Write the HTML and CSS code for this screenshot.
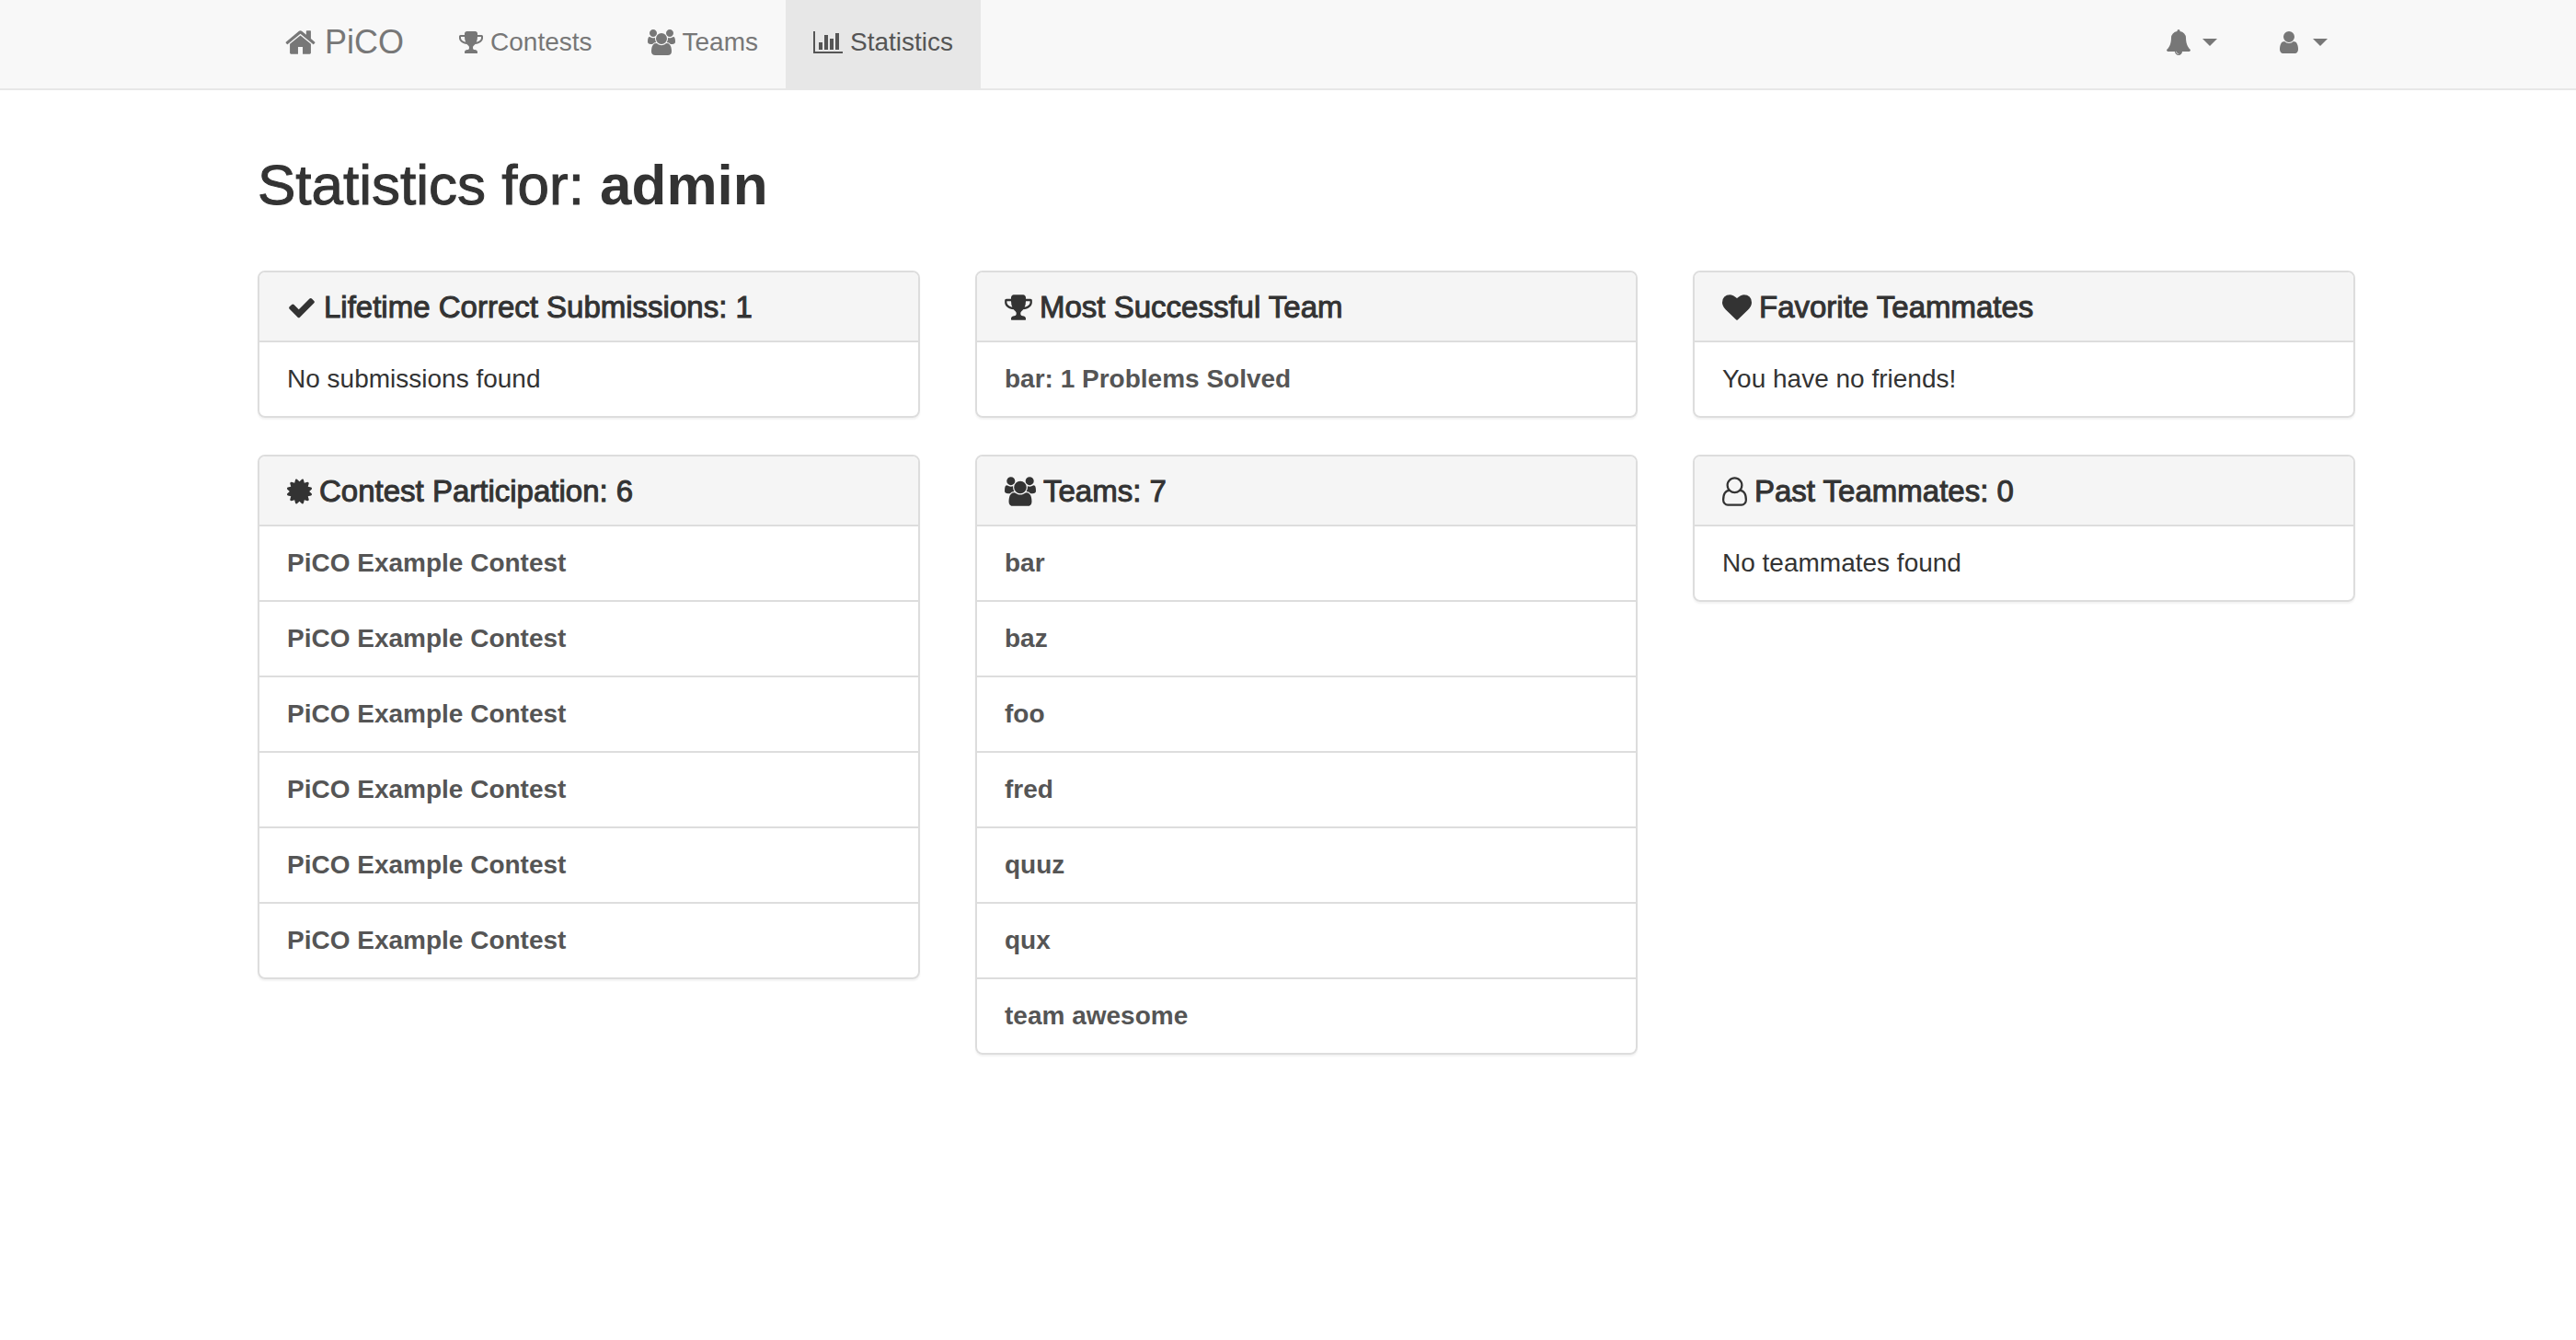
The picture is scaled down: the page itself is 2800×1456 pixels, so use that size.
FILE: index.html
```html
<!DOCTYPE html>
<html lang="en">
<head>
<meta charset="utf-8">
<meta name="viewport" content="width=device-width, initial-scale=1">
<title>PiCO - Statistics</title>
<link rel="stylesheet" href="styles.css">
</head>
<body>
<svg class="sprite" aria-hidden="true">
  <symbol id="home" viewBox="64 0 1664 1792"><path d="M1472 992v480q0 26-19 45t-45 19h-384v-384h-256v384h-384q-26 0-45-19t-19-45v-480q0-1 .5-3t.5-3l575-474 575 474q1 2 1 6zm223-69l-62 74q-8 9-21 11h-3q-13 0-21-7l-692-577-692 577q-12 8-24 7-13-2-21-11l-62-74q-8-10-7-23.5t11-21.5l719-599q32-26 76-26t76 26l244 204v-195q0-14 9-23t23-9h192q14 0 23 9t9 23v408l219 182q10 8 11 21.5t-7 23.5z"/></symbol>
  <symbol id="trophy" viewBox="64 0 1664 1792"><path d="M522 883q-74-162-74-371h-256v96q0 78 94.5 162t235.5 113zm1078-275v-96h-256q0 209-74 371 141-29 235.5-113t94.5-162zm128-128v128q0 71-41.5 143t-112 130-173 97.5-215.5 44.5q-42 54-95 95-38 34-52.5 72.5t-14.5 89.5q0 54 30.5 91t97.5 37q75 0 133.5 45.5t58.5 114.5v64q0 14-9 23t-23 9h-832q-14 0-23-9t-9-23v-64q0-69 58.5-114.5t133.5-45.5q67 0 97.5-37t30.5-91q0-51-14.5-89.5t-52.5-72.5q-53-41-95-95-113-5-215.5-44.5t-173-97.5-112-130-41.5-143v-128q0-40 28-68t68-28h288v-96q0-66 47-113t113-47h576q66 0 113 47t47 113v96h288q40 0 68 28t28 68z"/></symbol>
  <symbol id="users" viewBox="64 0 1920 1792"><path d="M657 896q-162 5-265 128h-134q-82 0-138-40.5t-56-118.5q0-353 124-353 6 0 43.5 21t97.5 42.5 119 21.5q67 0 133-23-5 37-5 66 0 139 81 256zm1071 637q0 120-73 189.5t-194 69.5h-874q-121 0-194-69.5t-73-189.5q0-53 3.5-103.5t14-109 26.5-108.5 43-97.5 62-81 85.5-53.5 111.5-20q10 0 43 21.5t73 48 107 48 135 21.5 135-21.5 107-48 73-48 43-21.5q61 0 111.5 20t85.5 53.5 62 81 43 97.5 26.5 108.5 14 109 3.5 103.5zm-1024-1277q0 106-75 181t-181 75-181-75-75-181 75-181 181-75 181 75 75 181zm704 384q0 159-112.5 271.5t-271.5 112.5-271.5-112.5-112.5-271.5 112.5-271.5 271.5-112.5 271.5 112.5 112.5 271.5zm576 225q0 78-56 118.5t-138 40.5h-134q-103-123-265-128 81-117 81-256 0-29-5-66 66 23 133 23 59 0 119-21.5t97.5-42.5 43.5-21q124 0 124 353zm-128-609q0 106-75 181t-181 75-181-75-75-181 75-181 181-75 181 75 75 181z"/></symbol>
  <symbol id="chart" viewBox="0 0 2048 1792"><path d="M640 896v512h-256v-512zm384-512v1024h-256v-1024zm1024 1152v128h-2048v-1536h128v1408zm-640-896v768h-256v-768zm384-384v1152h-256v-1152z"/></symbol>
  <symbol id="bell" viewBox="0 0 1792 1792"><path d="M912 1696q0-16-16-16-59 0-101.5-42.5t-42.5-101.5q0-16-16-16t-16 16q0 73 51.5 124.5t124.5 51.5q16 0 16-16zm816-288q0 52-38 90t-90 38h-448q0 106-75 181t-181 75-181-75-75-181h-448q-52 0-90-38t-38-90q50-42 91-88t85-119.5 74.5-158.5 50-206 19.5-260q0-152 117-282.5t307-158.5q-8-19-8-39 0-40 28-68t68-28 68 28 28 68q0 20-8 39 190 28 307 158.5t117 282.5q0 139 19.5 260t50 206 74.5 158.5 85 119.5 91 88z"/></symbol>
  <symbol id="user" viewBox="0 0 1792 1792"><path d="M1536 1399q0 109-62.5 187t-150.5 78h-854q-88 0-150.5-78t-62.5-187q0-85 8.5-160.5t31.5-152 58.5-131 94-89 134.5-34.5q131 128 313 128t313-128q76 0 134.5 34.5t94 89 58.5 131 31.5 152 8.5 160.5zm-256-887q0 159-112.5 271.5t-271.5 112.5-271.5-112.5-112.5-271.5 112.5-271.5 271.5-112.5 271.5 112.5 112.5 271.5z"/></symbol>
  <symbol id="check" viewBox="0 0 1792 1792"><path d="M1671 566q0 40-28 68l-724 724-136 136q-28 28-68 28t-68-28l-136-136-362-362q-28-28-28-68t28-68l136-136q28-28 68-28t68 28l294 295 656-657q28-28 68-28t68 28l136 136q28 28 28 68z"/></symbol>
  <symbol id="certificate" viewBox="128 0 1536 1792"><path d="M1504 896l138 135q30 28 20 70-12 41-52 51l-188 48 53 186q12 41-19 70-29 31-70 19l-186-53-48 188q-10 40-51 52-12 2-19 2-31 0-51-22l-135-138-135 138q-28 30-70 20-41-11-51-52l-48-188-186 53q-41 12-70-19-31-29-19-70l53-186-188-48q-40-10-52-51-10-42 20-70l138-135-138-135q-30-28-20-70 12-41 52-51l188-48-53-186q-12-41 19-70 29-31 70-19l186 53 48-188q10-41 51-51 41-12 70 19l135 139 135-139q29-30 70-19 41 10 51 51l48 188 186-53q41-12 70 19 31 29 19 70l-53 186 188 48q40 10 52 51 10 42-20 70z"/></symbol>
  <symbol id="heart" viewBox="0 0 1792 1792"><path d="M896 1664q-26 0-44-18l-624-602q-10-8-27.5-26t-55.5-65.5-68-97.5-53.5-121-23.5-138q0-220 127-344t351-124q62 0 126.5 21.5t120 58 95.5 68.5 76 68q36-36 76-68t95.5-68.5 120-58 126.5-21.5q224 0 351 124t127 344q0 221-229 450l-623 600q-18 18-44 18z"/></symbol>
  <symbol id="user-o" viewBox="0 0 1536 1792"><path d="M1201 784q47 14 89.5 38t89 73 79.5 115.5 55 172 22 236.5q0 154-100 263.5t-241 109.5h-854q-141 0-241-109.5t-100-263.5q0-131 22-236.5t55-172 79.5-115.5 89-73 89.5-38q-79-125-79-272 0-104 40.5-198.5t109.5-163.5 163.5-109.5 198.5-40.5 198.5 40.5 163.5 109.5 109.5 163.5 40.5 198.5q0 147-79 272zm-433-656q-159 0-271.5 112.5t-112.5 271.5 112.5 271.5 271.5 112.5 271.5-112.5 112.5-271.5-112.5-271.5-271.5-112.5zm427 1536q88 0 150.5-71.5t62.5-173.5q0-239-78.5-377t-225.5-145q-145 127-336 127t-336-127q-147 7-225.5 145t-78.5 377q0 102 62.5 173.5t150.5 71.5h854z"/></symbol>
</svg>

<header class="navbar">
  <nav class="container nav">
    <a class="nav-item brand" href="#"><svg class="icon icon-home"><use href="#home"/></svg>PiCO</a>
    <a class="nav-item" href="#"><svg class="icon icon-trophy"><use href="#trophy"/></svg>Contests</a>
    <a class="nav-item" href="#"><svg class="icon icon-users"><use href="#users"/></svg>Teams</a>
    <a class="nav-item active" href="#" aria-current="page"><svg class="icon icon-chart"><use href="#chart"/></svg>Statistics</a>
    <div class="nav-right">
      <button class="nav-item" type="button" aria-label="Notifications"><svg class="icon icon-fixed"><use href="#bell"/></svg><span class="caret"></span></button>
      <button class="nav-item" type="button" aria-label="Account"><svg class="icon icon-fixed"><use href="#user"/></svg><span class="caret"></span></button>
    </div>
  </nav>
</header>

<main class="page">
  <div class="container">
    <h1 class="page-title">Statistics for: <strong>admin</strong></h1>
    <div class="panels">
      <section class="panel">
        <h2 class="panel-title"><svg class="icon icon-check"><use href="#check"/></svg>Lifetime Correct Submissions: 1</h2>
        <p class="panel-body">No submissions found</p>
      </section>
      <section class="panel">
        <h2 class="panel-title"><svg class="icon icon-trophy"><use href="#trophy"/></svg>Most Successful Team</h2>
        <ul class="list">
          <li><a href="#">bar: 1 Problems Solved</a></li>
        </ul>
      </section>
      <section class="panel">
        <h2 class="panel-title"><svg class="icon icon-heart"><use href="#heart"/></svg>Favorite Teammates</h2>
        <p class="panel-body">You have no friends!</p>
      </section>
      <section class="panel">
        <h2 class="panel-title"><svg class="icon icon-certificate"><use href="#certificate"/></svg>Contest Participation: 6</h2>
        <ul class="list">
          <li><a href="#">PiCO Example Contest</a></li>
          <li><a href="#">PiCO Example Contest</a></li>
          <li><a href="#">PiCO Example Contest</a></li>
          <li><a href="#">PiCO Example Contest</a></li>
          <li><a href="#">PiCO Example Contest</a></li>
          <li><a href="#">PiCO Example Contest</a></li>
        </ul>
      </section>
      <section class="panel">
        <h2 class="panel-title"><svg class="icon icon-users"><use href="#users"/></svg>Teams: 7</h2>
        <ul class="list">
          <li><a href="#">bar</a></li>
          <li><a href="#">baz</a></li>
          <li><a href="#">foo</a></li>
          <li><a href="#">fred</a></li>
          <li><a href="#">quuz</a></li>
          <li><a href="#">qux</a></li>
          <li><a href="#">team awesome</a></li>
        </ul>
      </section>
      <section class="panel">
        <h2 class="panel-title"><svg class="icon icon-user-o"><use href="#user-o"/></svg>Past Teammates: 0</h2>
        <p class="panel-body">No teammates found</p>
      </section>
    </div>
  </div>
</main>
</body>
</html>
```
FILE: styles.css
```css
* {
  box-sizing: border-box;
}

body {
  margin: 0;
  background: #fff;
  color: #333;
  font-family: "Helvetica Neue", "Liberation Sans", Arial, sans-serif;
  font-size: 28px;
  line-height: 40px;
}

a {
  color: inherit;
  text-decoration: none;
}

.sprite {
  display: none;
}

.navbar,
.page {
  padding-left: 40px;
}

.container {
  max-width: 2340px;
  margin: 0 auto;
  padding: 0 30px;
}

/* Navigation */
.navbar {
  background: #f8f8f8;
  border-bottom: 2px solid #e7e7e7;
}

.nav {
  display: flex;
  flex-wrap: wrap;
}

.nav-item {
  display: flex;
  align-items: center;
  gap: 8px;
  padding: 26px 30px 30px;
  border: 0;
  background: none;
  color: #777;
  font: inherit;
  cursor: pointer;
}

.brand {
  gap: 10px;
  font-size: 36px;
}

.active {
  background: #e7e7e7;
  color: #555;
}

.nav-right {
  display: flex;
  margin-left: auto;
}

.caret {
  border: 8px solid transparent;
  border-top-color: currentColor;
  border-bottom: 0;
}

/* Icons */
.icon {
  flex: none;
  height: 28px;
  fill: currentColor;
}

.icon-home { width: 33px; height: 36px; }
.icon-trophy { width: 26px; }
.icon-users { width: 30px; }
.icon-chart { width: 32px; }
.icon-fixed { width: 36px; }

.panel-title .icon { height: 32px; }
.panel-title .icon-check,
.panel-title .icon-heart { width: 32px; }
.panel-title .icon-trophy { width: 30px; }
.panel-title .icon-users { width: 34px; }
.panel-title .icon-certificate,
.panel-title .icon-user-o { width: 27px; }

/* Page */
.page-title {
  margin: 0;
  padding: 70px 0 60px;
  font-size: 62px;
  font-weight: 400;
  line-height: 66px;
  -webkit-text-stroke: 1px currentColor;
}

.page-title strong {
  font-weight: 700;
  -webkit-text-stroke: 0;
}

.panels {
  display: grid;
  grid-template-columns: repeat(auto-fit, minmax(min(100%, 600px), 1fr));
  align-items: start;
  gap: 40px 60px;
  padding-bottom: 40px;
}

.panel {
  overflow: hidden;
  border: 2px solid #ddd;
  border-radius: 8px;
  box-shadow: 0 2px 2px rgba(0, 0, 0, 0.05);
}

.panel-title {
  display: flex;
  align-items: center;
  gap: 8px;
  margin: 0;
  padding: 20px 30px 18px;
  background: #f5f5f5;
  font-size: 33px;
  font-weight: 400;
  line-height: 36px;
  -webkit-text-stroke: 1px currentColor;
}

.panel-body,
.list li {
  margin: 0;
  padding: 20px 30px;
  border-top: 2px solid #ddd;
}

.list {
  margin: 0;
  padding: 0;
  list-style: none;
}

.list a {
  color: #555;
  font-weight: 700;
}
```
